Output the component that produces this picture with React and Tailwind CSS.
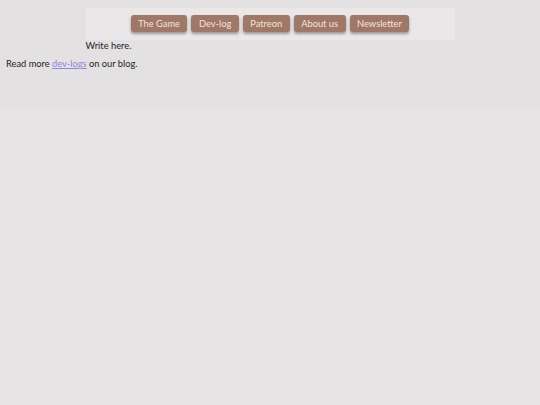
const links = ["The Game", "Dev-log", "Patreon", "About us", "Newsletter"];

const App = () => {
  return (
    <div className="min-h-[405px] bg-[#e6e4e5] text-[#1f1f1f]" style={{ fontFamily: 'Lato, sans-serif' }}>
      <div className="h-[107px] bg-[#e3e1e2] pt-[8px]">
        <div className="mx-auto w-[369px]">
          <nav className="flex h-[32px] items-center justify-center gap-[4px] bg-[#e9e7e8]">
            {links.map((l) => (
              <a
                key={l}
                className="-mt-[1px] rounded-[3px] bg-[#a07868] px-[7.5px] py-[2px] text-[9.3px] leading-[13px] text-[#f3e4dc] shadow-[0_2px_3px_rgba(0,0,0,0.35)]"
              >
                {l}
              </a>
            ))}
          </nav>
          <p className="text-[9.3px] leading-[12px]">Write here.</p>
        </div>
        <p className="mt-[6px] pl-[6px] text-[9.3px] leading-[12px]">
          Read more <a className="text-[#8f86e0] underline">dev-logs</a> on our blog.
        </p>
      </div>
    </div>
  );
};

export default App;
